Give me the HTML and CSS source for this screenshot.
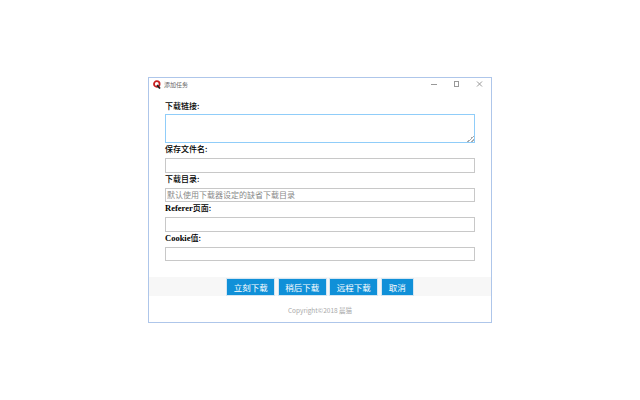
FILE: index.html
```html
<!DOCTYPE html>
<html lang="zh">
<head>
<meta charset="utf-8">
<title>添加任务</title>
<link rel="stylesheet" href="styles.css">
</head>
<body>
<div class="window">
  <div class="titlebar">
    <svg class="logo" width="8" height="9" viewBox="0 0 8 9"><circle cx="3.8" cy="4" r="2.8" fill="none" stroke="#c81e1e" stroke-width="1.8"/><path d="M4 5 L7 8.5" stroke="#222" stroke-width="1.8"/></svg>
    <span class="title">添加任务</span>
    <div class="controls">
      <svg width="9" height="9" viewBox="0 0 9 9"><path d="M2 4.5H8" stroke="#999" fill="none"/></svg>
      <svg width="9" height="9" viewBox="0 0 9 9"><rect x="2.5" y="1.5" width="4" height="5" stroke="#999" fill="none"/></svg>
      <svg width="9" height="9" viewBox="0 0 9 9"><path d="M2 1.5L7 6.5M7 1.5L2 6.5" stroke="#999" fill="none"/></svg>
    </div>
  </div>
  <form class="form">
    <label class="label first">下载链接:</label>
    <textarea class="area"></textarea>
    <label class="label">保存文件名:</label>
    <input class="field" type="text">
    <label class="label short">下载目录:</label>
    <input class="field" type="text" placeholder="默认使用下载器设定的缺省下载目录">
    <label class="label short"><b class="latin">Referer</b>页面:</label>
    <input class="field" type="text">
    <label class="label short"><b class="latin">Cookie</b>值:</label>
    <input class="field" type="text">
  </form>
  <div class="actions">
    <button class="btn" type="button">立刻下载</button>
    <button class="btn" type="button">稍后下载</button>
    <button class="btn" type="button">远程下载</button>
    <button class="btn cancel" type="button">取消</button>
  </div>
  <div class="copy">Copyright©2018 晨猫</div>
</div>
</body>
</html>
```
FILE: styles.css
```css
html, body { margin: 0; padding: 0; background: #fff; }
body { width: 640px; height: 400px; overflow: hidden; font-family: "Noto Sans CJK SC", sans-serif; }
.window { box-sizing: border-box; width: 344px; height: 246px; margin: 77px 0 0 148px; border: 1px solid #aec6ea; display: flex; flex-direction: column; background: #fff; }
.titlebar { height: 13px; padding: 0 7px 0 4px; display: flex; align-items: center; flex: none; }
.logo { flex: none; }
.title { margin-left: 3px; font: 6px "Noto Sans CJK SC", sans-serif; color: #666; }
.controls { margin-left: auto; display: flex; gap: 14px; }
.form { display: flex; flex-direction: column; padding: 0 16px; flex: none; }
.label { display: block; font: 500 8px/11px "Noto Sans CJK SC", sans-serif; color: #000; height: 15px; }
.label.first { margin-top: 8px; line-height: 13px; }
.latin { font: bold 8.5px/11px "Liberation Serif", serif; color: #000; }
.area, .field { box-sizing: border-box; display: block; width: 310px; margin: 0; outline: 0; background: #fff; font: 8px "Noto Sans CJK SC", sans-serif; }
.area { height: 29px; border: 1px solid #90cdf9; resize: both; }
.area::-webkit-resizer { background: linear-gradient(135deg, transparent 50%, #aaa 50%, #aaa 62%, transparent 62%, transparent 75%, #aaa 75%, #aaa 87%, transparent 87%) no-repeat right bottom / 7px 7px; }
.field { height: 14.5px; border: 1px solid #c8c8c8; padding: 0 0 0 1px; }
.field::placeholder { color: #888; opacity: 1; }
.actions { margin-top: 15.5px; height: 19px; padding: 1px 0 0; box-sizing: border-box; background: #f7f7f7; display: flex; justify-content: center; gap: 2.5px; flex: none; }
.btn { box-sizing: border-box; width: 49px; height: 18px; padding: 0; border: 1px solid #d4e6f3; background: #1090d8; color: #fff; font: 8.5px "Noto Sans CJK SC", sans-serif; }
.btn.cancel { width: 33px; }
.copy { text-align: center; margin-top: 9px; font: 6.5px/10px "Noto Sans CJK SC", sans-serif; color: #aaa; }
```
